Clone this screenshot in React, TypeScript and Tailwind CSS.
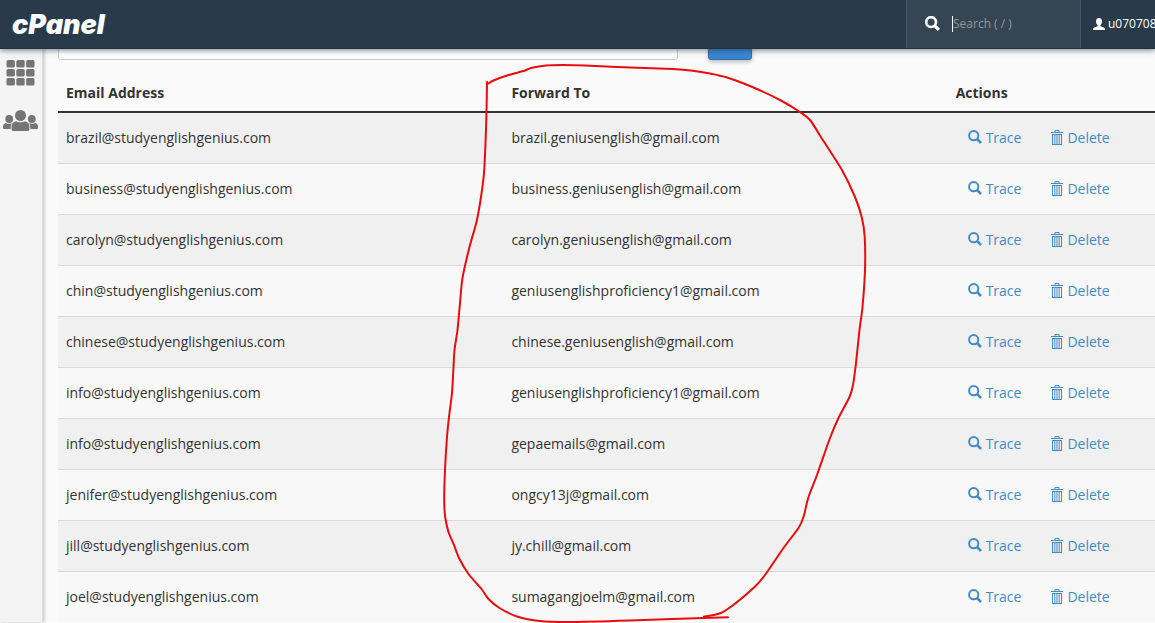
type Forwarder = { from: string; to: string };
type Point = [number, number];

const forwarders: Forwarder[] = [
  { from: "brazil@studyenglishgenius.com", to: "brazil.geniusenglish@gmail.com" },
  { from: "business@studyenglishgenius.com", to: "business.geniusenglish@gmail.com" },
  { from: "carolyn@studyenglishgenius.com", to: "carolyn.geniusenglish@gmail.com" },
  { from: "chin@studyenglishgenius.com", to: "geniusenglishproficiency1@gmail.com" },
  { from: "chinese@studyenglishgenius.com", to: "chinese.geniusenglish@gmail.com" },
  { from: "info@studyenglishgenius.com", to: "geniusenglishproficiency1@gmail.com" },
  { from: "info@studyenglishgenius.com", to: "gepaemails@gmail.com" },
  { from: "jenifer@studyenglishgenius.com", to: "ongcy13j@gmail.com" },
  { from: "jill@studyenglishgenius.com", to: "jy.chill@gmail.com" },
  { from: "joel@studyenglishgenius.com", to: "sumagangjoelm@gmail.com" },
];

function SearchIcon({ className, weight }: { className: string; weight: number }) {
  return (
    <svg className={className} viewBox="0 0 14 14" fill="none" stroke="currentColor" aria-hidden="true">
      <circle cx="5.7" cy="5.7" r="4.6" strokeWidth={weight} />
      <path d="M9.2 9.2L13 13" strokeWidth={weight + 0.6} />
    </svg>
  );
}

function TrashIcon() {
  return (
    <svg className="mb-0.5 h-[15px] w-3" viewBox="0 0 12 15" fill="none" stroke="currentColor" aria-hidden="true">
      <path d="M4 2V0.500H8V2" strokeWidth="1" />
      <path d="M0 2.500H12" strokeWidth="1" />
      <path d="M1 4.500H11M1 14.500H11" strokeWidth="1" />
      <path d="M1.500 4V15M10.500 4V15" strokeWidth="1" />
      <path d="M3.800 5V14M6 5V14M8.200 5V14" strokeWidth="1" />
    </svg>
  );
}

function UserIcon() {
  return (
    <svg className="h-3 w-3" viewBox="0 0 12 12" fill="currentColor" aria-hidden="true">
      <path d="M6 0C4.100 0 3 1.300 3 3.200C3 4.800 3.600 6.300 4.600 7.100V8.200L1.200 9.600C.4 10 0 10.600 0 11.400V12H12V11.400C12 10.600 11.600 10 10.800 9.600L7.400 8.200V7.100C8.400 6.300 9 4.800 9 3.200C9 1.300 7.900 0 6 0Z" />
    </svg>
  );
}

function GridIcon() {
  const cells = [0, 1, 2];
  return (
    <svg className="h-[26px] w-[29px]" viewBox="0 0 29 26" fill="currentColor" aria-hidden="true">
      {cells.map((r) =>
        cells.map((c) => (
          <rect key={`${r}-${c}`} x={0.5 + c * 9.8} y={r * 9} width="8.4" height="7.4" rx="1.5" />
        )),
      )}
    </svg>
  );
}

function UsersIcon() {
  return (
    <svg className="h-[21px] w-[35px]" viewBox="0 0 35 21" fill="currentColor" aria-hidden="true">
      <circle cx="17.5" cy="5.5" r="5.5" />
      <circle cx="6.2" cy="9" r="3.9" />
      <circle cx="28.8" cy="9" r="3.9" />
      <path d="M8.600 21V16.600C8.600 13.500 10.200 11.800 13.200 11.200C15.500 12.700 19.500 12.700 21.800 11.200C24.800 11.800 26.400 13.500 26.400 16.600V19.500Q26.400 21 24.900 21H10.100Q8.600 21 8.600 19.500Z" />
      <path d="M0 18V16.500C0 14.500 1 13.200 3 12.900C5 14.100 7.200 14.100 8.900 13C8 14.200 7.700 15.500 7.700 19H1Q0 19 0 18Z" />
      <path d="M35 18V16.500C35 14.500 34 13.200 32 12.900C30 14.100 27.800 14.100 26.100 13C27 14.200 27.300 15.500 27.300 19H34Q35 19 35 18Z" />
    </svg>
  );
}

function Header() {
  return (
    <header className="relative z-20 flex h-[49px] shrink-0 border-b border-[#22303d] bg-[#293a4a] text-white shadow-[0_2px_5px_rgba(41,58,74,0.5)]">
      <a href="#home" className="flex items-center pl-3 font-['Inter',sans-serif] text-[27px] leading-none font-black italic">
        cPanel
      </a>
      <label className="ml-auto flex w-[175px] items-center border-x border-[#43586a] bg-[#354553] pl-[18px]">
        <span className="sr-only">Search</span>
        <SearchIcon className="mb-0.5 h-[15px] w-[15px] shrink-0" weight={2.4} />
        <span className="ml-3 h-4 w-px shrink-0 bg-white" />
        <input
          type="text"
          placeholder="Search ( / )"
          className="w-full min-w-0 bg-transparent text-[12px] outline-none placeholder:text-[#8f989f]"
        />
      </label>
      <a href="#account" className="flex w-[74px] shrink-0 items-center gap-[3px] overflow-hidden pl-3 text-[12px] font-medium whitespace-nowrap">
        <span className="shrink-0">
          <UserIcon />
        </span>
        u070708
      </a>
    </header>
  );
}

function Sidebar() {
  return (
    <nav className="z-10 flex w-[43px] shrink-0 flex-col items-start gap-6 border-r border-[#dcdcdc] bg-[#f4f4f4] text-[#757575] shadow-[1px_0_4px_rgba(0,0,0,0.25)]">
      <a href="#tools" aria-label="Tools" className="mt-[11px] ml-[6px]">
        <GridIcon />
      </a>
      <a href="#users" aria-label="User Manager" className="ml-[3px]">
        <UsersIcon />
      </a>
    </nav>
  );
}

function ForwarderTable() {
  return (
    <table className="w-full table-fixed border-separate border-spacing-0 text-left text-[14px] leading-5">
      <thead>
        <tr className="font-bold">
          <th className="w-[40.6%] border-b-2 border-[#333] p-2">Email Address</th>
          <th className="w-[40.5%] border-b-2 border-[#333] p-2">Forward To</th>
          <th className="w-[18.9%] border-b-2 border-[#333] p-2">Actions</th>
        </tr>
      </thead>
      <tbody>
        {forwarders.map((f) => (
          <tr key={f.from + f.to} className="h-[51px] odd:bg-[#f0f0f0] even:bg-[#f8f8f8] *:border-b *:border-[#d9d9d9] last:h-[50px] last:*:border-b-0">
            <td className="px-2">{f.from}</td>
            <td className="px-2">{f.to}</td>
            <td className="px-2">
              <div className="flex gap-[30px] pl-3 whitespace-nowrap text-[#428bca]">
                <a href="#trace" className="flex items-center gap-1">
                  <SearchIcon className="mb-0.5 h-[14px] w-[14px]" weight={2} />
                  Trace
                </a>
                <a href="#delete" className="flex items-center gap-1">
                  <TrashIcon />
                  Delete
                </a>
              </div>
            </td>
          </tr>
        ))}
      </tbody>
    </table>
  );
}

const leftStroke: Point[] = [
  [487, 82], [486.5, 112], [485.5, 143], [484, 173], [481, 197], [476.5, 222], [469.5, 247], [462.5, 278],
  [460, 303], [457.5, 330], [454.5, 350], [453.2, 373], [452, 393], [449, 417], [447, 437], [445, 470],
  [444.2, 500], [445.2, 517], [448.5, 532], [454, 545], [459, 558], [468.5, 574], [481.5, 589], [488.5, 599],
  [499.5, 608], [517, 616.5], [540, 621], [570, 622], [630, 620.5], [703, 618], [728, 617.3],
];

const rightStroke: Point[] = [
  [488.5, 83.5], [493.5, 80.5], [508.5, 75], [523.5, 71], [532, 67.8], [546, 65.5], [563, 65], [585, 65.5],
  [617, 67], [673, 69], [693, 70.7], [710, 73.5], [727, 77.5], [750, 86], [780, 100], [800, 112], [810, 120],
  [823.5, 141], [842, 170], [855, 197], [861.7, 217], [864.7, 237], [865, 270], [862.5, 307], [859.5, 330],
  [856, 363], [853, 385], [849.5, 397], [838.5, 418], [830, 438], [817, 475], [808.5, 497], [803.5, 517],
  [798.5, 528], [783.5, 548], [765, 575], [753.5, 588], [732, 606], [719.5, 613.5], [704, 616.8],
];

/* Catmull-Rom spline through the given points, as cubic Béziers. */
function smooth(points: Point[]): string {
  let d = `M${points[0][0]} ${points[0][1]}`;
  for (let i = 0; i < points.length - 1; i++) {
    const a = points[Math.max(i - 1, 0)];
    const b = points[i];
    const c = points[i + 1];
    const e = points[Math.min(i + 2, points.length - 1)];
    d += `C${b[0] + (c[0] - a[0]) / 8} ${b[1] + (c[1] - a[1]) / 8} ${c[0] - (e[0] - b[0]) / 8} ${c[1] - (e[1] - b[1]) / 8} ${c[0]} ${c[1]}`;
  }
  return d;
}

/* Freehand marker loop around the "Forward To" column. */
function MarkerLoop() {
  return (
    <svg
      className="pointer-events-none absolute top-0 left-0 z-30 h-[623px] w-[1155px]"
      viewBox="0 0 1155 623"
      fill="none"
      stroke="#e80c0c"
      strokeWidth="2"
      strokeLinejoin="round"
      strokeLinecap="round"
      aria-hidden="true"
    >
      <path d={smooth(leftStroke)} />
      <path d={smooth(rightStroke)} />
    </svg>
  );
}

export default function App() {
  return (
    <div className="relative flex min-h-screen flex-col overflow-hidden bg-white font-['Open_Sans',sans-serif] text-[#333]">
      <Header />
      <div className="mb-px flex flex-1 bg-[#fafafa]">
        <Sidebar />
        <main className="min-w-0 flex-1 pl-[15px]">
          <form className="flex h-[26px] items-end gap-[30px] overflow-hidden pb-[15px]">
            <input
              type="text"
              aria-label="Search forwarders"
              className="h-8 w-[620px] shrink-0 rounded-[3px] border border-[#ccc] bg-white px-3 outline-none"
            />
            <button
              type="button"
              aria-label="Go"
              className="h-8 w-11 shrink-0 rounded-[3px] border border-[#2f6fab] bg-[#3a87d0] shadow-[0_2px_4px_rgba(0,0,0,0.25)]"
            />
          </form>
          <ForwarderTable />
        </main>
      </div>
      <MarkerLoop />
    </div>
  );
}
